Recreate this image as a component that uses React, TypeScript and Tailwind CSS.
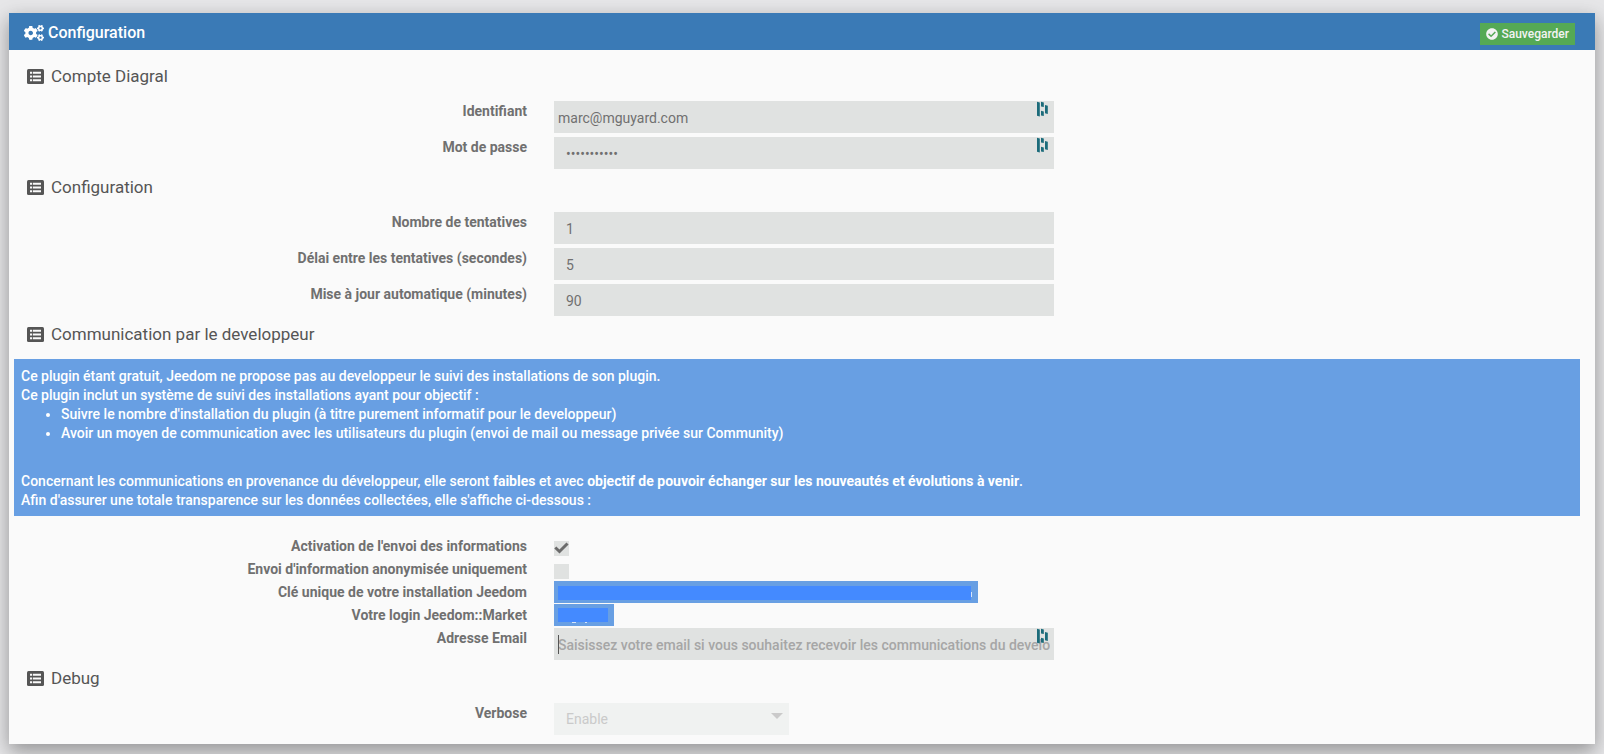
import { useId, type ReactNode } from "react";
import { FaCheckCircle, FaCogs } from "react-icons/fa";

const fieldClass =
  "block h-8 w-full appearance-none rounded-none border-0 bg-[#e0e2e1] text-sm text-[#707070] outline-none";

function ListIcon() {
  return (
    <svg className="h-[15px] w-[17px] shrink-0" viewBox="0 0 17 15" aria-hidden="true">
      <rect width="17" height="15" rx="1.5" fill="#555" />
      <path
        fill="#fafafa"
        d="M3 2.800h2.200v2H3zM6 2.800h8v2H6zM3 6.500h2.200v2H3zM6 6.500h8v2H6zM3 10.200h2.200v2H3zM6 10.200h8v2H6z"
      />
    </svg>
  );
}

function Section({ title, children }: { title: string; children: ReactNode }) {
  return (
    <section>
      <h2 className="mb-[7px] flex h-9 items-center gap-[7px] pl-[18px] text-[17px] text-[#555]">
        <ListIcon />
        {title}
      </h2>
      {children}
    </section>
  );
}

function Label({ htmlFor, children }: { htmlFor?: string; children: ReactNode }) {
  return (
    <label
      htmlFor={htmlFor}
      className="col-span-4 pr-3 text-right text-sm font-bold text-[#707070]"
    >
      {children}
    </label>
  );
}

function VaultMark() {
  return (
    <svg
      className="pointer-events-none absolute top-0 right-[6px] h-4 w-3"
      viewBox="0 0 12 16"
      fill="#1b6b7a"
      aria-hidden="true"
    >
      <path d="M1 .8l2.800.7v14L1 14.800zM5 .8l2.800.7v4.600L5 5.400zM5 9.800l2.800.7v4.600L5 14.400zM9 4l2.800.7v8.200L9 12.200z" />
    </svg>
  );
}

type TextRowProps = {
  label: string;
  type?: string;
  value?: string;
  placeholder?: string;
  vault?: boolean;
  tight?: boolean;
  caret?: boolean;
};

function TextRow({ label, type = "text", value, placeholder, vault, tight, caret }: TextRowProps) {
  const id = useId();
  return (
    <div className="grid grid-cols-12">
      <Label htmlFor={id}>{label}</Label>
      <div className="col-span-4 px-[15px]">
        <div className="relative">
          <input
            id={id}
            type={type}
            defaultValue={value}
            placeholder={placeholder}
            className={`${fieldClass} pt-[2px] placeholder:font-medium placeholder:text-[#a6a6a6] ${tight ? "px-1" : "px-3"}`}
          />
          {caret && <span className="absolute top-[7px] left-1 h-[19px] w-px bg-[#555]" />}
          {vault && <VaultMark />}
        </div>
      </div>
    </div>
  );
}

function CheckRow({ label, checked }: { label: string; checked?: boolean }) {
  const id = useId();
  return (
    <div className="grid h-[23px] grid-cols-12">
      <Label htmlFor={id}>{label}</Label>
      <div className="col-span-4 px-[15px] pt-[5px]">
        <div className="relative size-[15px]">
          <input
            id={id}
            type="checkbox"
            defaultChecked={checked}
            className="peer block size-[15px] appearance-none bg-[#e0e2e1]"
          />
          <svg
            className="pointer-events-none absolute inset-0 hidden size-[15px] peer-checked:block"
            viewBox="0 0 15 15"
            fill="none"
            stroke="#6b6b6b"
            strokeWidth="3"
            aria-hidden="true"
          >
            <path d="M1.300 6.500L5.500 10.500L13.500 2.500" />
          </svg>
        </div>
      </div>
    </div>
  );
}

function HiddenRow({ label, children }: { label: string; children: ReactNode }) {
  return (
    <div className="grid h-[23px] grid-cols-12">
      <span className="col-span-4 pr-3 text-right text-sm font-bold text-[#707070]">{label}</span>
      <div className="col-span-4 px-[15px]">
        <div className="-mt-px flex h-[22px] w-fit bg-[#689fe3]">{children}</div>
      </div>
    </div>
  );
}

export default function App() {
  return (
    <div className="min-h-screen overflow-hidden bg-[#e6e6e8] px-[9px] pt-[13px] pb-[10px] font-[Roboto,sans-serif] text-sm leading-5">
      <main className="bg-[#fafafa] pb-[9px] shadow-[0_8px_17px_0_rgba(0,0,0,0.2),0_6px_20px_0_rgba(0,0,0,0.19)]">
        <header className="flex h-[37px] items-center justify-between bg-[#3a7ab6] pr-5 pl-[15px] text-white">
          <h1 className="flex items-center gap-1 pt-[2px] text-base font-medium">
            <FaCogs className="size-5" aria-hidden="true" />
            Configuration
          </h1>
          <button
            type="button"
            className="mt-1 flex h-[22px] items-center gap-[3px] bg-[#55a955] px-[6px] pt-px text-xs font-medium text-[#f3f3f3]"
          >
            <FaCheckCircle className="size-3" aria-hidden="true" />
            Sauvegarder
          </button>
        </header>

        <form className="-mr-1 pt-2">
          <Section title="Compte Diagral">
            <div className="flex flex-col gap-1">
              <TextRow label="Identifiant" value="marc@mguyard.com" vault tight />
              <TextRow label="Mot de passe" type="password" value="abcdefghijk" vault />
            </div>
          </Section>

          <Section title="Configuration">
            <div className="flex flex-col gap-1">
              <TextRow label="Nombre de tentatives" value="1" />
              <TextRow label="Délai entre les tentatives (secondes)" value="5" />
              <TextRow label="Mise à jour automatique (minutes)" value="90" />
            </div>
          </Section>

          <Section title="Communication par le developpeur">
            <div className="mr-[19px] mb-5 ml-[5px] bg-[#689fe3] px-[7px] pt-2 pb-[6px] leading-[19px] font-medium text-white">
              <p>
                Ce plugin étant gratuit, Jeedom ne propose pas au developpeur le suivi des
                installations de son plugin.
              </p>
              <p>Ce plugin inclut un système de suivi des installations ayant pour objectif :</p>
              <ul className="mb-[29px] list-disc pl-10">
                <li>
                  Suivre le nombre d'installation du plugin (à titre purement informatif pour le
                  developpeur)
                </li>
                <li>
                  Avoir un moyen de communication avec les utilisateurs du plugin (envoi de mail ou
                  message privée sur Community)
                </li>
              </ul>
              <p>
                Concernant les communications en provenance du développeur, elle seront{" "}
                <b className="font-bold">faibles</b> et avec{" "}
                <b className="font-bold">
                  objectif de pouvoir échanger sur les nouveautés et évolutions à venir
                </b>
                .
              </p>
              <p>
                Afin d'assurer une totale transparence sur les données collectées, elle s'affiche
                ci-dessous :
              </p>
            </div>

            <CheckRow label="Activation de l'envoi des informations" checked />
            <CheckRow label="Envoi d'information anonymisée uniquement" />
            <HiddenRow label="Clé unique de votre installation Jeedom">
              <svg className="h-[22px] w-[424px]" viewBox="0 0 424 22" aria-hidden="true">
                <rect x="4" y="5" width="413" height="14" fill="#448aff" />
                <rect x="417" y="11" width="1" height="5" fill="#d5e4f8" />
              </svg>
            </HiddenRow>
            <HiddenRow label="Votre login Jeedom::Market">
              <svg className="h-[22px] w-[60px]" viewBox="0 0 60 22" aria-hidden="true">
                <rect x="4" y="4" width="50" height="14" fill="#448aff" />
                <path d="M18 18h4v1h-4zM31 18h2v1h-2z" fill="#d5e4f8" />
              </svg>
            </HiddenRow>
            <TextRow
              label="Adresse Email"
              type="email"
              placeholder="Saisissez votre email si vous souhaitez recevoir les communications du developpeur"
              vault
              tight
              caret
            />
          </Section>

          <Section title="Debug">
            <div className="grid grid-cols-12">
              <Label htmlFor="verbose">Verbose</Label>
              <div className="col-span-2 px-[15px]">
                <div className="relative">
                  <select
                    id="verbose"
                    disabled
                    className="block h-8 w-full appearance-none bg-[#f0f2f1] px-3 text-sm text-[#cacaca] opacity-100"
                  >
                    <option>Enable</option>
                  </select>
                  <svg
                    className="pointer-events-none absolute top-[10px] right-[6px] h-[6px] w-3"
                    viewBox="0 0 12 6"
                    fill="#cacaca"
                    aria-hidden="true"
                  >
                    <path d="M0 0h12L6 6z" />
                  </svg>
                </div>
              </div>
            </div>
          </Section>
        </form>
      </main>
    </div>
  );
}
